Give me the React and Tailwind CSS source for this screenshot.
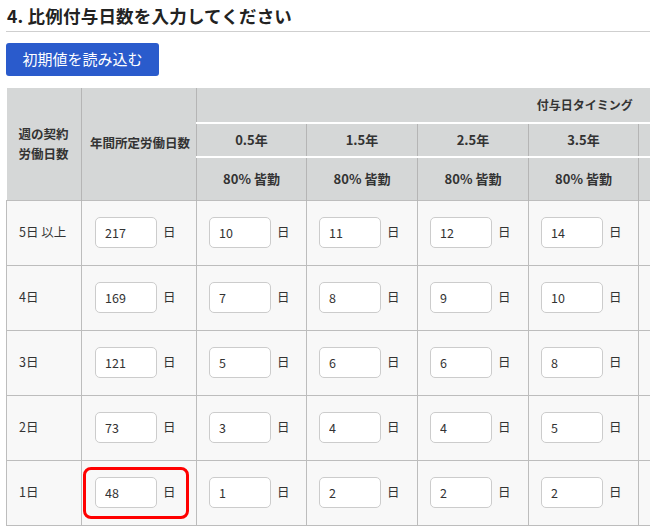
import React from 'react'

const timings = ['0.5年', '1.5年', '2.5年', '3.5年', '4.5年', '5.5年', '6.5年以上']
const colWidths = ['w-[110px]', 'w-[111px]', 'w-[111px]', 'w-[110px]', 'w-[110px]', 'w-[110px]', 'w-[110px]']

const rows = [
  { label: '5日 以上', total: 217, days: [10, 11, 12, 14, 16, 18, 20] },
  { label: '4日', total: 169, days: [7, 8, 9, 10, 12, 13, 15] },
  { label: '3日', total: 121, days: [5, 6, 6, 8, 9, 10, 11] },
  { label: '2日', total: 73, days: [3, 4, 4, 5, 6, 6, 7] },
  { label: '1日', total: 48, days: [1, 2, 2, 2, 3, 3, 3] },
]

const DayInput = ({ value }) => (
  <div className="flex items-center gap-[6px]">
    <input
      type="text"
      defaultValue={value}
      className="w-[62px] h-[31px] rounded-[5px] border border-[#cccccc] bg-white pl-[9px] text-[12.5px] text-[#333] outline-none"
    />
    <span className="text-[12.5px] text-[#333]">日</span>
  </div>
)

const App = () => {
  return (
    <div
      className="w-[650px] h-[531px] overflow-hidden bg-white text-[#333]"
      style={{ fontFamily: '"Noto Sans CJK JP", "Liberation Sans", sans-serif' }}
    >
      <div className="pl-[6px] pt-[4px]">
        <h2 className="border-b border-[#cfcfcf] pl-[1px] pb-[4px] text-[17.5px] font-bold leading-[23px] tracking-[0.2px] text-[#222]">
          4. 比例付与日数を入力してください
        </h2>

        <button className="mt-[11px] h-[33px] w-[153px] rounded-[3px] bg-[#2a5bcc] text-[15px] text-white">
          初期値を読み込む
        </button>

        <div className="mt-[12px]">
          <table className="table-fixed border-collapse w-[962px] text-[12.5px]">
            <colgroup>
              <col className="w-[75px]" />
              <col className="w-[115px]" />
              {timings.map((t, i) => (
                <col key={t} className={colWidths[i]} />
              ))}
            </colgroup>
            <thead className="bg-[#d5d7d7] font-bold">
              <tr className="h-[35px]">
                <th rowSpan={3} className="border-r border-[#b5b5b5] pl-[12px] text-left leading-[20px] font-bold">
                  週の契約<br />労働日数
                </th>
                <th rowSpan={3} className="border-r border-[#b5b5b5] pl-[8px] text-left font-bold">
                  年間所定労働日数
                </th>
                <th colSpan={7} className="border-b-2 border-white text-center font-bold pl-[4px] text-[12px]">
                  付与日タイミング
                </th>
              </tr>
              <tr className="h-[34px]">
                {timings.map((t) => (
                  <th key={t} className="border-r border-b-2 border-r-[#b5b5b5] border-b-white text-center font-bold text-[13px]">
                    {t}
                  </th>
                ))}
              </tr>
              <tr className="h-[43px]">
                {timings.map((t) => (
                  <th key={t} className="border-r border-[#b5b5b5] text-center font-bold text-[13px]">
                    80% 皆勤
                  </th>
                ))}
              </tr>
            </thead>
            <tbody className="bg-[#f8f8f8]">
              {rows.map((row, i) => (
                <tr key={row.label} className="h-[65px]">
                  <td className="border border-[#bdbdbd] pl-[12px]">{row.label}</td>
                  <td className="border border-[#bdbdbd] pl-[13px]">
                    <div className="relative">
                      <DayInput value={row.total} />
                      {i === rows.length - 1 && (
                        <div className="absolute left-[-12px] top-[-10px] h-[52px] w-[106px] rounded-[8px] border-[3.5px] border-[#ff0000]" />
                      )}
                    </div>
                  </td>
                  {row.days.map((d, j) => (
                    <td key={j} className="border border-[#bdbdbd] pl-[12px]">
                      <DayInput value={d} />
                    </td>
                  ))}
                </tr>
              ))}
            </tbody>
          </table>
        </div>
      </div>
    </div>
  )
}

export default App
